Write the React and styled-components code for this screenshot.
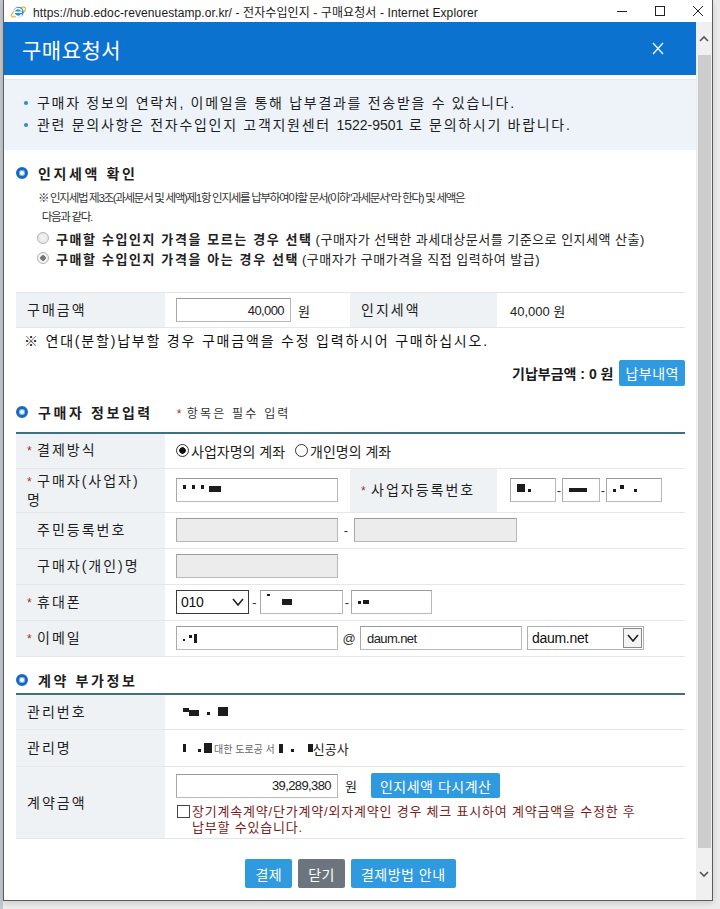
import styled, { createGlobalStyle } from "styled-components";

const GlobalStyle = createGlobalStyle`
  html, body { margin: 0; padding: 0; background: #e6e6e6; }
  body { font-family: "Liberation Sans", "Noto Sans CJK KR", sans-serif; color: #222; }
  * { box-sizing: border-box; }
`;

const Screen = styled.div`
  width: 720px;
  height: 909px;
  overflow: hidden;
  background: linear-gradient(to right, #c3c8cf 0, #c3c8cf 3px, #ececec 3px);
`;

const Window = styled.div`
  margin-left: 3px;
  width: 710px;
  height: 901px;
  background: #fff;
  border: 1px solid #5c5c5c;
  border-top: none;
  display: flex;
  flex-direction: column;
  box-shadow: 0 2px 6px rgba(0, 0, 0, 0.15);
`;

const TitleBar = styled.div`
  height: 22px;
  flex: none;
  display: flex;
  align-items: center;
  padding-left: 6px;
  font-size: 12px;
  letter-spacing: 0.1px;
  color: #1a1a1a;
  gap: 6px;
`;

const WinControls = styled.div`
  margin-left: auto;
  display: flex;
  align-items: center;
  gap: 26px;
  padding-right: 8px;
`;

const Body = styled.div`
  flex: 1;
  display: flex;
  min-height: 0;
`;

const Main = styled.div`
  flex: 1;
  overflow: hidden;
`;

const Scrollbar = styled.div`
  width: 16px;
  flex: none;
  background: #f0f0f0;
  display: flex;
  flex-direction: column;
  align-items: center;
`;

const ScrollArrow = styled.div`
  height: ${(p) => p.$h}px;
  width: 100%;
  display: flex;
  align-items: center;
  justify-content: center;
`;

const ScrollThumb = styled.div`
  width: 13px;
  flex: 1;
  background: #cdcdcd;
`;

const Header = styled.div`
  height: 53px;
  background: #0b72d0;
  display: flex;
  align-items: center;
  justify-content: space-between;
  padding: 0 32px 0 18px;
  color: #fff;
  font-size: 21px;
  letter-spacing: 0.5px;
`;

const InfoBox = styled.div`
  margin-top: 4px;
  border-top: 1px solid #e2eaf2;
  background: #edf3f9;
  padding: 12px 0 14px 20px;
`;

const InfoItem = styled.div`
  display: flex;
  align-items: center;
  gap: 5px;
  font-size: 14px;
  letter-spacing: 1.7px;
  line-height: 22px;
  color: #1e1e1e;

  &::before {
    content: "";
    width: 4px;
    height: 4px;
    border-radius: 50%;
    background: #2b8ad8;
    margin-right: 4px;
  }
`;

const Digits = styled.span`
  letter-spacing: 0;
`;

const Content = styled.div`
  padding: 0 11px 0 12px;
`;

const SectionTitle = styled.div`
  display: flex;
  align-items: center;
  height: 20px;
  margin-top: ${(p) => p.$mt}px;
  font-size: 14px;
  font-weight: bold;
  letter-spacing: 2.6px;
  color: #1e1e1e;
`;

const Ring = styled.span`
  width: 12px;
  height: 12px;
  border-radius: 50%;
  border: 3px solid #1569c0;
  background: #fff;
  box-shadow: inset 0 0 0 1px #7bb6ea;
  margin: 0 10px 0 0;
`;

const Required = styled.span`
  margin-left: 24px;
  font-size: 12px;
  font-weight: normal;
  letter-spacing: 2.2px;
  color: #333;
`;

const Star = styled.span`
  color: #a82a2a;
  font-size: 12px;
  display: inline-block;
  width: 10px;
  letter-spacing: 0;
`;

const Note = styled.div`
  padding-left: 22px;
  margin-top: 6px;
  font-size: 11.5px;
  letter-spacing: -1.3px;
  line-height: 19px;
  color: #333;
`;

const RadioRow = styled.div`
  display: flex;
  align-items: center;
  padding-left: 21px;
  height: 20px;
  font-size: 13px;
  letter-spacing: 0.5px;
  color: #222;
  margin-top: ${(p) => p.$mt || 0}px;

  b {
    letter-spacing: 1.6px;
    margin: 0 3px 0 7px;
  }
`;

const RadioDot = styled.span`
  width: 12px;
  height: 12px;
  border-radius: 50%;
  border: 1px solid #b4b4b4;
  background: radial-gradient(circle, ${(p) => (p.$on ? "#777 0, #777 2.5px, #f2f2f2 3px" : "#f4f4f4 0, #e4e4e4 6px")});
  flex: none;
`;

const Table = styled.table`
  width: 100%;
  border-collapse: collapse;
  table-layout: fixed;
  margin-top: ${(p) => p.$mt}px;
  border-top: ${(p) => (p.$strong ? "2px solid #3f6f80" : "1px solid #dfe5e8")};
`;

const Row = styled.tr`
  height: ${(p) => p.$h}px;
  border-bottom: 1px solid #e2e7ea;
`;

const Label = styled.th`
  background: #eef2f5;
  text-align: left;
  font-weight: normal;
  font-size: 14px;
  letter-spacing: 2px;
  line-height: 18px;
  color: #1e1e1e;
  padding: 0 0 0 ${(p) => (p.$indent ? 21 : 11)}px;
`;

const Cell = styled.td`
  padding: ${(p) => p.$pad || "0 0 0 11px"};
  font-size: 13px;
  color: #222;
  vertical-align: ${(p) => (p.$top ? "top" : "middle")};
`;

const Line = styled.div`
  display: flex;
  align-items: center;
  gap: ${(p) => p.$gap ?? 0}px;
`;

const Input = styled.div`
  width: ${(p) => p.$w}px;
  height: 24px;
  border: 1px solid #b9b9b9;
  border-top-color: #9a9a9a;
  border-left-color: #a8a8a8;
  background: ${(p) => (p.$disabled ? "#ececec" : "#fff")};
  display: flex;
  align-items: center;
  justify-content: ${(p) => (p.$right ? "flex-end" : "flex-start")};
  padding: 0 6px;
  font-size: 13px;
  letter-spacing: -0.6px;
  color: #222;
  flex: none;
`;

const SelectBox = styled.div`
  width: ${(p) => p.$w}px;
  height: 24px;
  border: 1px solid ${(p) => (p.$dark ? "#3a3a3a" : "#b0b0b0")};
  display: flex;
  align-items: center;
  justify-content: space-between;
  padding-left: 4px;
  font-size: 14px;
  letter-spacing: -0.3px;
  color: #111;
  flex: none;
`;

const SelectArrow = styled.span`
  width: 19px;
  height: 20px;
  margin-right: 1px;
  display: flex;
  align-items: center;
  justify-content: center;
  border: ${(p) => (p.$boxed ? "1px solid #8a8a8a" : "none")};
  background: ${(p) => (p.$boxed ? "#f4f4f4" : "transparent")};
`;

const Sep = styled.span`
  width: ${(p) => p.$w ?? 8}px;
  text-align: center;
  font-size: 13px;
  color: #333;
  flex: none;
`;

const Blot = styled.span`
  display: inline-block;
  width: ${(p) => p.$w}px;
  height: ${(p) => p.$h}px;
  margin-right: ${(p) => p.$gap ?? 4}px;
  background: ${(p) => p.$c ?? "#1c1c1c"};
  transform: translateY(${(p) => p.$y ?? 0}px);
  flex: none;
`;

const CircleRadio = styled.span`
  width: 13px;
  height: 13px;
  border-radius: 50%;
  border: 1px solid #333;
  background: radial-gradient(circle, ${(p) => (p.$on ? "#111 0, #111 3px, #fff 3.5px" : "#fff 0, #fff 6px")});
  margin-right: 2px;
  flex: none;
`;

const RadioText = styled.span`
  font-size: 14px;
  color: #222;
  margin-right: 10px;
`;

const MutedNote = styled.div`
  margin-top: 3px;
  padding-left: 8px;
  height: 20px;
  line-height: 20px;
  font-size: 14px;
  letter-spacing: 1.8px;
  color: #111;
`;

const PaidRow = styled.div`
  display: flex;
  justify-content: flex-end;
  align-items: center;
  gap: 6px;
  margin-top: 9px;
  height: 26px;
  font-size: 14px;
  font-weight: bold;
  color: #1a1a1a;
`;

const BlueButton = styled.button`
  height: ${(p) => p.$h || 26}px;
  padding: 0 ${(p) => p.$px ?? 7}px;
  border: none;
  border-radius: 2px;
  background: ${(p) => (p.$gray ? "#6c757d" : "#2f9ae0")};
  color: #fff;
  font-family: inherit;
  font-size: 14px;
  letter-spacing: 0.5px;
  flex: none;
`;

const Won = styled.span`
  font-size: 13px;
  margin-left: 7px;
  color: #222;
`;

const CheckLine = styled.div`
  display: flex;
  align-items: flex-start;
  margin-top: 6px;
  font-size: 13px;
  line-height: 16px;
  color: #7b1c1c;
  letter-spacing: 0.8px;
`;

const CheckBox = styled.span`
  width: 13px;
  height: 13px;
  border: 1px solid #444;
  background: #fff;
  margin: 1px 2px 0 1px;
  flex: none;
`;

const Faint = styled.span`
  font-size: 10px;
  color: #666;
  margin-right: 4px;
`;

const Footer = styled.div`
  display: flex;
  justify-content: center;
  gap: 6px;
  margin-top: 20px;
`;

const Chevron = ({ up }) => (
  <svg width="10" height="7" viewBox="0 0 10 7">
    <path d={up ? "M1 6 L5 2 L9 6" : "M1 1 L5 5 L9 1"} fill="none" stroke="#555" strokeWidth="1.6" />
  </svg>
);

const SelChevron = () => (
  <svg width="12" height="8" viewBox="0 0 12 8">
    <path d="M1 1 L6 7 L11 1" fill="none" stroke="#222" strokeWidth="1.6" />
  </svg>
);

const IeIcon = () => (
  <svg width="17" height="17" viewBox="0 0 17 17">
    <ellipse cx="8.5" cy="9" rx="8" ry="3.2" fill="none" stroke="#e7b52a" strokeWidth="1.3" transform="rotate(-30 8.5 9)" />
    <circle cx="8.5" cy="9" r="5.2" fill="#2a8fe0" />
    <path d="M5 9.2 H12 M11.6 11.4 A4 4 0 1 1 11.8 8" fill="none" stroke="#fff" strokeWidth="1.6" />
  </svg>
);

function App() {
  return (
    <>
      <GlobalStyle />
      <Screen>
        <Window>
          <TitleBar>
            <IeIcon />
            <span>https://hub.edoc-revenuestamp.or.kr/ - 전자수입인지 - 구매요청서 - Internet Explorer</span>
            <WinControls>
              <svg width="12" height="12" viewBox="0 0 12 12">
                <path d="M1 6.5 H11" stroke="#222" strokeWidth="1" />
              </svg>
              <svg width="12" height="12" viewBox="0 0 12 12">
                <rect x="1.5" y="1.5" width="9" height="9" fill="none" stroke="#222" strokeWidth="1" />
              </svg>
              <svg width="12" height="12" viewBox="0 0 12 12">
                <path d="M1 1 L11 11 M11 1 L1 11" stroke="#222" strokeWidth="1" />
              </svg>
            </WinControls>
          </TitleBar>

          <Body>
            <Main>
              <Header>
                <span>구매요청서</span>
                <svg width="12" height="13" viewBox="0 0 12 13">
                  <path d="M1 1 L11 12 M11 1 L1 12" stroke="#dff0ff" strokeWidth="1.5" />
                </svg>
              </Header>

              <InfoBox>
                <InfoItem>
                  <span>구매자 정보의 연락처, 이메일을 통해 납부결과를 전송받을 수 있습니다.</span>
                </InfoItem>
                <InfoItem>
                  <span>
                    관련 문의사항은 전자수입인지 고객지원센터 <Digits>1522-9501</Digits> 로 문의하시기 바랍니다.
                  </span>
                </InfoItem>
              </InfoBox>

              <Content>
                <SectionTitle $mt={13}>
                  <Ring />
                  인지세액 확인
                </SectionTitle>
                <Note>
                  ※ 인지세법 제3조(과세문서 및 세액)제1항 인지세를 납부하여야할 문서(이하"과세문서"라 한다) 및 세액은
                  <br />
                  &nbsp;&nbsp;다음과 같다.
                </Note>
                <RadioRow $mt={1}>
                  <RadioDot />
                  <b>구매할 수입인지 가격을 모르는 경우 선택</b>
                  (구매자가 선택한 과세대상문서를 기준으로 인지세액 산출)
                </RadioRow>
                <RadioRow>
                  <RadioDot $on />
                  <b>구매할 수입인지 가격을 아는 경우 선택</b>
                  (구매자가 구매가격을 직접 입력하여 발급)
                </RadioRow>

                <Table $mt={24}>
                  <colgroup>
                    <col style={{ width: 149 }} />
                    <col style={{ width: 185 }} />
                    <col style={{ width: 147 }} />
                    <col />
                  </colgroup>
                  <tbody>
                    <Row $h={35}>
                      <Label>구매금액</Label>
                      <Cell>
                        <Line>
                          <Input $w={115} $right>40,000</Input>
                          <Won>원</Won>
                        </Line>
                      </Cell>
                      <Label>인지세액</Label>
                      <Cell $pad="0 0 0 13px">40,000 원</Cell>
                    </Row>
                  </tbody>
                </Table>

                <MutedNote>※ 연대(분할)납부할 경우 구매금액을 수정 입력하시어 구매하십시오.</MutedNote>

                <PaidRow>
                  기납부금액 : 0 원
                  <BlueButton $h={26} $px={6}>납부내역</BlueButton>
                </PaidRow>

                <SectionTitle $mt={16}>
                  <Ring />
                  구매자 정보입력
                  <Required>
                    <Star>*</Star>항목은 필수 입력
                  </Required>
                </SectionTitle>

                <Table $mt={10} $strong>
                  <colgroup>
                    <col style={{ width: 149 }} />
                    <col style={{ width: 185 }} />
                    <col style={{ width: 147 }} />
                    <col />
                  </colgroup>
                  <tbody>
                    <Row $h={35}>
                      <Label><Star>*</Star>결제방식</Label>
                      <Cell colSpan={3}>
                        <Line>
                          <CircleRadio $on />
                          <RadioText>사업자명의 계좌</RadioText>
                          <CircleRadio />
                          <RadioText>개인명의 계좌</RadioText>
                        </Line>
                      </Cell>
                    </Row>
                    <Row $h={44}>
                      <Label><Star>*</Star>구매자(사업자)<br />명</Label>
                      <Cell>
                        <Input $w={162}>
                          <Blot $w={3} $h={4} $gap={6} $y={-3} />
                          <Blot $w={3} $h={4} $gap={6} $y={-3} />
                          <Blot $w={3} $h={4} $gap={5} $y={-3} />
                          <Blot $w={12} $h={6} $gap={0} $y={-1} />
                        </Input>
                      </Cell>
                      <Label><Star>*</Star>사업자등록번호</Label>
                      <Cell $pad="0 0 0 13px">
                        <Line>
                          <Input $w={46}>
                            <Blot $w={8} $h={8} $gap={3} $y={-2} />
                            <Blot $w={3} $h={3} $gap={0} />
                          </Input>
                          <Sep $w={6}>-</Sep>
                          <Input $w={38}>
                            <Blot $w={18} $h={4} $gap={0} />
                          </Input>
                          <Sep $w={6}>-</Sep>
                          <Input $w={56}>
                            <Blot $w={3} $h={3} $gap={4} />
                            <Blot $w={4} $h={4} $gap={10} $y={-3} />
                            <Blot $w={3} $h={3} $gap={0} />
                          </Input>
                        </Line>
                      </Cell>
                    </Row>
                    <Row $h={36}>
                      <Label $indent>주민등록번호</Label>
                      <Cell colSpan={3}>
                        <Line>
                          <Input $w={162} $disabled />
                          <Sep $w={16}>-</Sep>
                          <Input $w={163} $disabled />
                        </Line>
                      </Cell>
                    </Row>
                    <Row $h={36}>
                      <Label $indent>구매자(개인)명</Label>
                      <Cell colSpan={3}>
                        <Input $w={162} $disabled />
                      </Cell>
                    </Row>
                    <Row $h={36}>
                      <Label><Star>*</Star>휴대폰</Label>
                      <Cell colSpan={3}>
                        <Line>
                          <SelectBox $w={73} $dark>
                            010
                            <SelectArrow><SelChevron /></SelectArrow>
                          </SelectBox>
                          <Sep $w={11}>-</Sep>
                          <Input $w={83}>
                            <Blot $w={3} $h={2} $gap={12} $y={-7} />
                            <Blot $w={10} $h={6} $gap={0} />
                          </Input>
                          <Sep $w={8}>-</Sep>
                          <Input $w={81}>
                            <Blot $w={3} $h={3} $gap={2} />
                            <Blot $w={6} $h={4} $gap={0} />
                          </Input>
                        </Line>
                      </Cell>
                    </Row>
                    <Row $h={36}>
                      <Label><Star>*</Star>이메일</Label>
                      <Cell colSpan={3}>
                        <Line>
                          <Input $w={162}>
                            <Blot $w={2} $h={2} $gap={4} $y={2} />
                            <Blot $w={3} $h={3} $gap={2} $y={-2} />
                            <Blot $w={3} $h={9} $gap={0} />
                          </Input>
                          <Sep $w={22}>@</Sep>
                          <Input $w={162}>daum.net</Input>
                          <Sep $w={5} />
                          <SelectBox $w={117}>
                            daum.net
                            <SelectArrow $boxed><SelChevron /></SelectArrow>
                          </SelectBox>
                        </Line>
                      </Cell>
                    </Row>
                  </tbody>
                </Table>

                <SectionTitle $mt={13}>
                  <Ring />
                  계약 부가정보
                </SectionTitle>

                <Table $mt={3} $strong>
                  <colgroup>
                    <col style={{ width: 149 }} />
                    <col />
                  </colgroup>
                  <tbody>
                    <Row $h={36}>
                      <Label>관리번호</Label>
                      <Cell $pad="0 0 0 18px">
                        <Line>
                          <Blot $w={6} $h={4} $gap={0} $y={-2} />
                          <Blot $w={10} $h={6} $gap={8} $y={1} />
                          <Blot $w={3} $h={3} $gap={8} $y={2} />
                          <Blot $w={10} $h={9} $gap={0} />
                        </Line>
                      </Cell>
                    </Row>
                    <Row $h={37}>
                      <Label>관리명</Label>
                      <Cell $pad="0 0 0 18px">
                        <Line>
                          <Blot $w={3} $h={8} $gap={12} />
                          <Blot $w={3} $h={3} $gap={3} $y={2} />
                          <Blot $w={8} $h={10} $gap={2} />
                          <Faint>대한 도로공 서</Faint>
                          <Blot $w={4} $h={9} $gap={8} />
                          <Blot $w={3} $h={3} $gap={14} $y={2} />
                          <Blot $w={5} $h={8} $gap={0} />
                          신공사
                        </Line>
                      </Cell>
                    </Row>
                    <Row $h={72}>
                      <Label>계약금액</Label>
                      <Cell $top $pad="6px 0 0 11px">
                        <Line>
                          <Input $w={162} $right>39,289,380</Input>
                          <Won>원</Won>
                          <Sep $w={14} />
                          <BlueButton $h={25} $px={9}>인지세액 다시계산</BlueButton>
                        </Line>
                        <CheckLine>
                          <CheckBox />
                          <span>
                            장기계속계약/단가계약/외자계약인 경우 체크 표시하여 계약금액을 수정한 후
                            <br />
                            납부할 수있습니다.
                          </span>
                        </CheckLine>
                      </Cell>
                    </Row>
                  </tbody>
                </Table>

                <Footer>
                  <BlueButton $h={29} $px={10}>결제</BlueButton>
                  <BlueButton $h={29} $px={10} $gray>닫기</BlueButton>
                  <BlueButton $h={29} $px={10}>결제방법 안내</BlueButton>
                </Footer>
              </Content>
            </Main>

            <Scrollbar>
              <ScrollArrow $h={33}><Chevron up /></ScrollArrow>
              <ScrollThumb />
              <ScrollArrow $h={52}><Chevron /></ScrollArrow>
            </Scrollbar>
          </Body>
        </Window>
      </Screen>
    </>
  );
}

export default App;
